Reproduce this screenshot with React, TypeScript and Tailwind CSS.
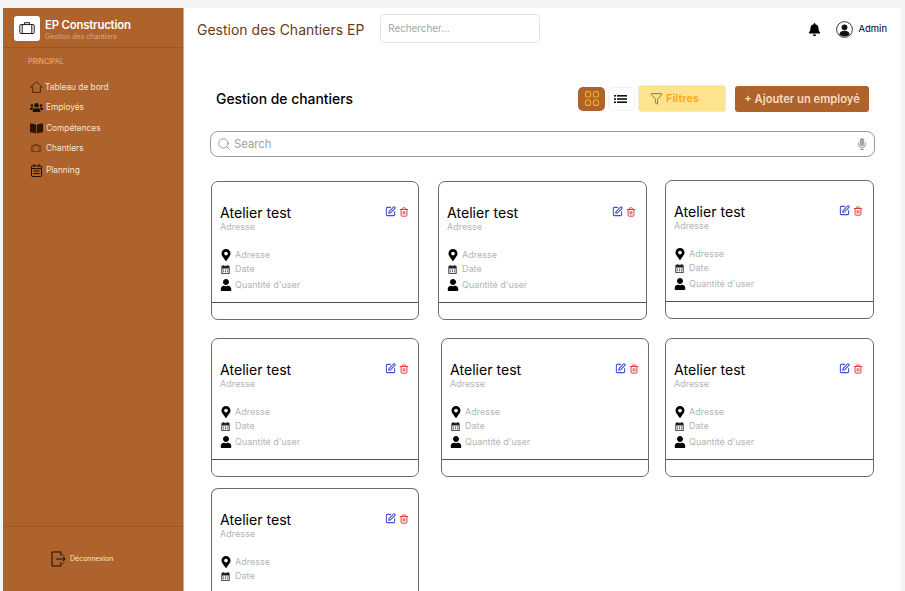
import { useState } from 'react'
import { Funnel, Search, SquarePen, Trash2 } from 'lucide-react'
import { FaBell, FaBookOpen, FaMapMarkerAlt, FaMicrophone, FaUser, FaUsers } from 'react-icons/fa'
import { MdCalendarMonth } from 'react-icons/md'

const font = "font-['Inter',sans-serif]"

function SuitcaseIcon({ width, height, color }: { width: number; height: number; color: string }) {
  return (
    <svg width={width} height={height} viewBox="0 0 18 14" fill="none" stroke={color} strokeWidth="1.1">
      <rect x="0.6" y="3" width="16.8" height="10.4" rx="1.2" />
      <path d="M3.4 3v10.4M14.6 3v10.4M6 3V0.8h6V3" />
    </svg>
  )
}

function HomeIcon() {
  return (
    <svg width="13" height="12" viewBox="0 0 13 12" fill="none" stroke="#4a2408" strokeWidth="0.9">
      <path d="M0.6 6L6.5 0.7 12.4 6H10.4V11.4H2.6V6z" />
    </svg>
  )
}

function PlanningIcon() {
  return (
    <svg width="11" height="13" viewBox="0 0 11 13" fill="none" stroke="#1f1005" strokeWidth="1">
      <rect x="0.5" y="1.8" width="10" height="10.7" rx="1" />
      <path d="M3 0v3M8 0v3M0.5 4.6h10M2.5 7h6M2.5 9.5h6" />
    </svg>
  )
}

function LogoutIcon() {
  return (
    <svg width="15" height="16" viewBox="0 0 15 16" fill="none" stroke="#111" strokeWidth="1">
      <path d="M10 5V1H1v14h9v-4" />
      <path d="M10 2l3 2v8l-3 2" stroke="#7a4018" />
      <path d="M5 8h9M12 6l2 2-2 2" />
    </svg>
  )
}

function AdminIcon() {
  return (
    <svg width="17" height="17" viewBox="0 0 17 17">
      <circle cx="8.5" cy="8.5" r="7.9" fill="none" stroke="#222" strokeWidth="0.9" />
      <circle cx="8.5" cy="6.3" r="2.9" fill="#111" />
      <path d="M3.4 13.6c0-2.6 2.2-3.8 5.1-3.8s5.1 1.2 5.1 3.8c-1.3 1.3-3.1 2-5.1 2s-3.8-.7-5.1-2z" fill="#111" />
    </svg>
  )
}

function GridIcon() {
  return (
    <svg width="14" height="15" viewBox="0 0 14 15" fill="none" stroke="#f5ae1e" strokeWidth="1.1">
      <rect x="0.6" y="0.6" width="5" height="5.4" rx="1.3" />
      <rect x="8.4" y="0.6" width="5" height="5.4" rx="1.3" />
      <rect x="0.6" y="9" width="5" height="5.4" rx="1.3" />
      <rect x="8.4" y="9" width="5" height="5.4" rx="1.3" />
    </svg>
  )
}

function ListIcon() {
  return (
    <svg width="13" height="8" viewBox="0 0 13 8" fill="#111" className="mr-[2px]">
      <rect x="0" y="0" width="2" height="1.6" />
      <rect x="3" y="0" width="10" height="1.6" />
      <rect x="0" y="3.2" width="2" height="1.6" />
      <rect x="3" y="3.2" width="10" height="1.6" />
      <rect x="0" y="6.4" width="2" height="1.6" />
      <rect x="3" y="6.4" width="10" height="1.6" />
    </svg>
  )
}

function Sidebar() {
  return (
    <aside className="w-[181px] h-[583px] shrink-0 bg-[#ad632b] flex flex-col border-r border-[#d9a884]">
      <div className="h-[40px] flex items-center gap-[5px] pl-[11px] border-b border-[#a3541f]">
        <div className="w-[26px] h-[25px] mt-[1px] bg-white rounded-[3px] flex items-center justify-center">
          <SuitcaseIcon width={16} height={12} color="#111" />
        </div>
        <div className="flex flex-col mt-[5px]">
          <span className="text-[11.4px] leading-[14px] font-semibold text-white tracking-[-0.2px]">EP Construction</span>
          <span className="text-[7px] leading-[10px] text-[#dfa77c]">Gestion des chantiers</span>
        </div>
      </div>
      <p className="pl-[25px] mt-[9px] text-[7px] leading-[9px] text-[#eeb68a]">PRINCIPAL</p>
      <nav className="mt-[14px] pl-[27px] flex flex-col">
        <div className="flex items-center gap-[2px] h-[14px]">
          <HomeIcon />
          <span className="text-[8.3px] text-[#f6e3d3]">Tableau de bord</span>
        </div>
        <div className="flex items-center gap-[3px] h-[14px] mt-[6px]">
          <FaUsers size={13} className="text-[#1a1208]" />
          <span className="text-[8.3px] text-[#f6e3d3]">Employés</span>
        </div>
        <div className="flex items-center gap-[3px] h-[14px] mt-[7px]">
          <FaBookOpen size={13} className="text-[#2a1607]" />
          <span className="text-[8.3px] text-[#f6e3d3]">Compétences</span>
        </div>
        <div className="flex items-center gap-[5px] h-[14px] mt-[6px] pl-[1px]">
          <SuitcaseIcon width={10} height={10} color="#4a2408" />
          <span className="text-[8.3px] text-[#f6e3d3]">Chantiers</span>
        </div>
        <div className="flex items-center gap-[4px] h-[14px] mt-[8px] pl-[1px]">
          <PlanningIcon />
          <span className="text-[8.3px] text-[#f6e3d3]">Planning</span>
        </div>
      </nav>
      <div className="mt-auto h-[65px] border-t border-[#a3541f] flex items-center pl-[48px] gap-[4px]">
        <LogoutIcon />
        <span className="text-[7px] text-[#f6e3d3]">Déconnexion</span>
      </div>
    </aside>
  )
}

function Header() {
  return (
    <header className="h-[40px] flex items-center pl-[13px] pr-[14px] pt-[2px]">
      <h1 className="text-[14px] text-[#6b3a17] whitespace-nowrap">Gestion des Chantiers EP</h1>
      <div className="ml-[16px] w-[160px] h-[29px] border border-[#e2e2e2] rounded-[4px] flex items-center pl-[7px] mb-[1px]">
        <span className="mt-[1px] text-[9.8px] text-[#a3a3a3]">Rechercher...</span>
      </div>
      <div className="ml-auto flex items-center">
        <FaBell size={13} className="text-black" />
        <div className="ml-[15px]"><AdminIcon /></div>
        <span className="ml-[5px] mt-[1px] text-[9.5px] text-black">Admin</span>
      </div>
    </header>
  )
}

function Toolbar() {
  const [view] = useState('grid')
  return (
    <div className="mt-[37px] h-[27px] flex items-center pl-[32px] pr-[32px]">
      <h2 className="mt-[1px] text-[13.9px] font-medium text-black">Gestion de chantiers</h2>
      <div className="ml-auto flex items-center">
        <button className={`w-[27px] h-[24px] rounded-[5px] flex items-center justify-center ${view === 'grid' ? 'bg-[#ad632b]' : ''}`}>
          <GridIcon />
        </button>
        <button className="ml-[3px] w-[27px] h-[24px] border border-[#f1f1f1] rounded-[5px] flex items-center justify-center">
          <ListIcon />
        </button>
        <button className="ml-[3px] w-[88px] h-[27px] bg-[#fee38f] border border-[#f1ecd8] rounded-[3px] flex items-center pl-[11px] gap-[3px]">
          <Funnel size={13} strokeWidth={1.2} className="text-[#4d4426]" />
          <span className="text-[11px] font-semibold text-[#fda50f]">Filtres</span>
        </button>
        <button className="ml-[9px] w-[134px] h-[26px] pt-[1px] bg-[#ad632b] rounded-[3px] flex items-center justify-center">
          <span className="text-[11.2px] font-semibold text-[#fbdcc0]">+ Ajouter un employé</span>
        </button>
      </div>
    </div>
  )
}

function SearchBar() {
  return (
    <div className="mt-[19px] ml-[26px] w-[665px] h-[26px] border border-[#9b9b9b] rounded-[8px] flex items-center pl-[6px] pr-[6px]">
      <Search size={14} strokeWidth={1.4} className="text-[#8a8a8a]" />
      <span className="ml-[3px] mt-[1px] text-[11.3px] text-[#9f9f9f]">Search</span>
      <FaMicrophone size={12} className="ml-auto text-[#a5a5a5]" />
    </div>
  )
}

function SiteCard({ className = '', clipped = false, wide = false }: { className?: string; clipped?: boolean; wide?: boolean }) {
  return (
    <div className={`${wide ? 'w-[209px]' : 'w-[208px]'} shrink-0 border border-[#6f6a63] rounded-[7px] bg-white flex flex-col ${clipped ? 'h-[103px] border-b-0 rounded-b-none' : 'h-[139px]'} ${className}`}>
      <div className="h-[120px] shrink-0 pl-[8px] pr-[9px] pt-[22px] relative">
        <div className={`absolute top-[24px] flex items-center gap-[3px] ${wide ? 'right-[10px]' : 'right-[9px]'}`}>
          <SquarePen size={11} strokeWidth={2.3} className="text-[#3f4fd0]" />
          <Trash2 size={10} strokeWidth={2.4} className="text-[#e63b40]" />
        </div>
        <p className="text-[14.1px] leading-[17px] text-black">Atelier test</p>
        <p className="text-[9px] leading-[11px] text-[#b4b4b4]">Adresse</p>
        <div className="mt-[16px] flex flex-col">
          <div className="flex items-center h-[14px]">
            <FaMapMarkerAlt size={12} className="text-black" />
            <span className="ml-[3px] text-[9px] text-[#b4b4b4]">Adresse</span>
          </div>
          <div className="flex items-center h-[14px]">
            <MdCalendarMonth size={11} className="text-[#222]" />
            <span className="ml-[4px] text-[9px] text-[#b4b4b4]">Date</span>
          </div>
          {!clipped && (
            <div className="flex items-center h-[18px]">
              <FaUser size={12} className="text-black" />
              <span className="ml-[3px] text-[9px] text-[#b4b4b4]">Quantité d'user</span>
            </div>
          )}
        </div>
      </div>
      {!clipped && <div className="border-t border-[#55504a] flex-1" />}
    </div>
  )
}

export default function App() {
  return (
    <div className={`w-[905px] h-[591px] overflow-hidden bg-[#f4f4f4] pt-[8px] pl-[3px] flex ${font}`}>
      <Sidebar />
      <main className="w-[717px] h-[583px] bg-white overflow-hidden">
        <Header />
        <Toolbar />
        <SearchBar />
        <div className="mt-[24px] pl-[27px] flex">
          <SiteCard />
          <SiteCard wide className="ml-[19px]" />
          <SiteCard wide className="ml-[18px] -mt-[1px]" />
        </div>
        <div className="mt-[18px] pl-[27px] flex">
          <SiteCard />
          <SiteCard className="ml-[22px]" />
          <SiteCard wide className="ml-[16px]" />
        </div>
        <div className="mt-[11px] pl-[27px] flex">
          <SiteCard clipped />
        </div>
      </main>
    </div>
  )
}
